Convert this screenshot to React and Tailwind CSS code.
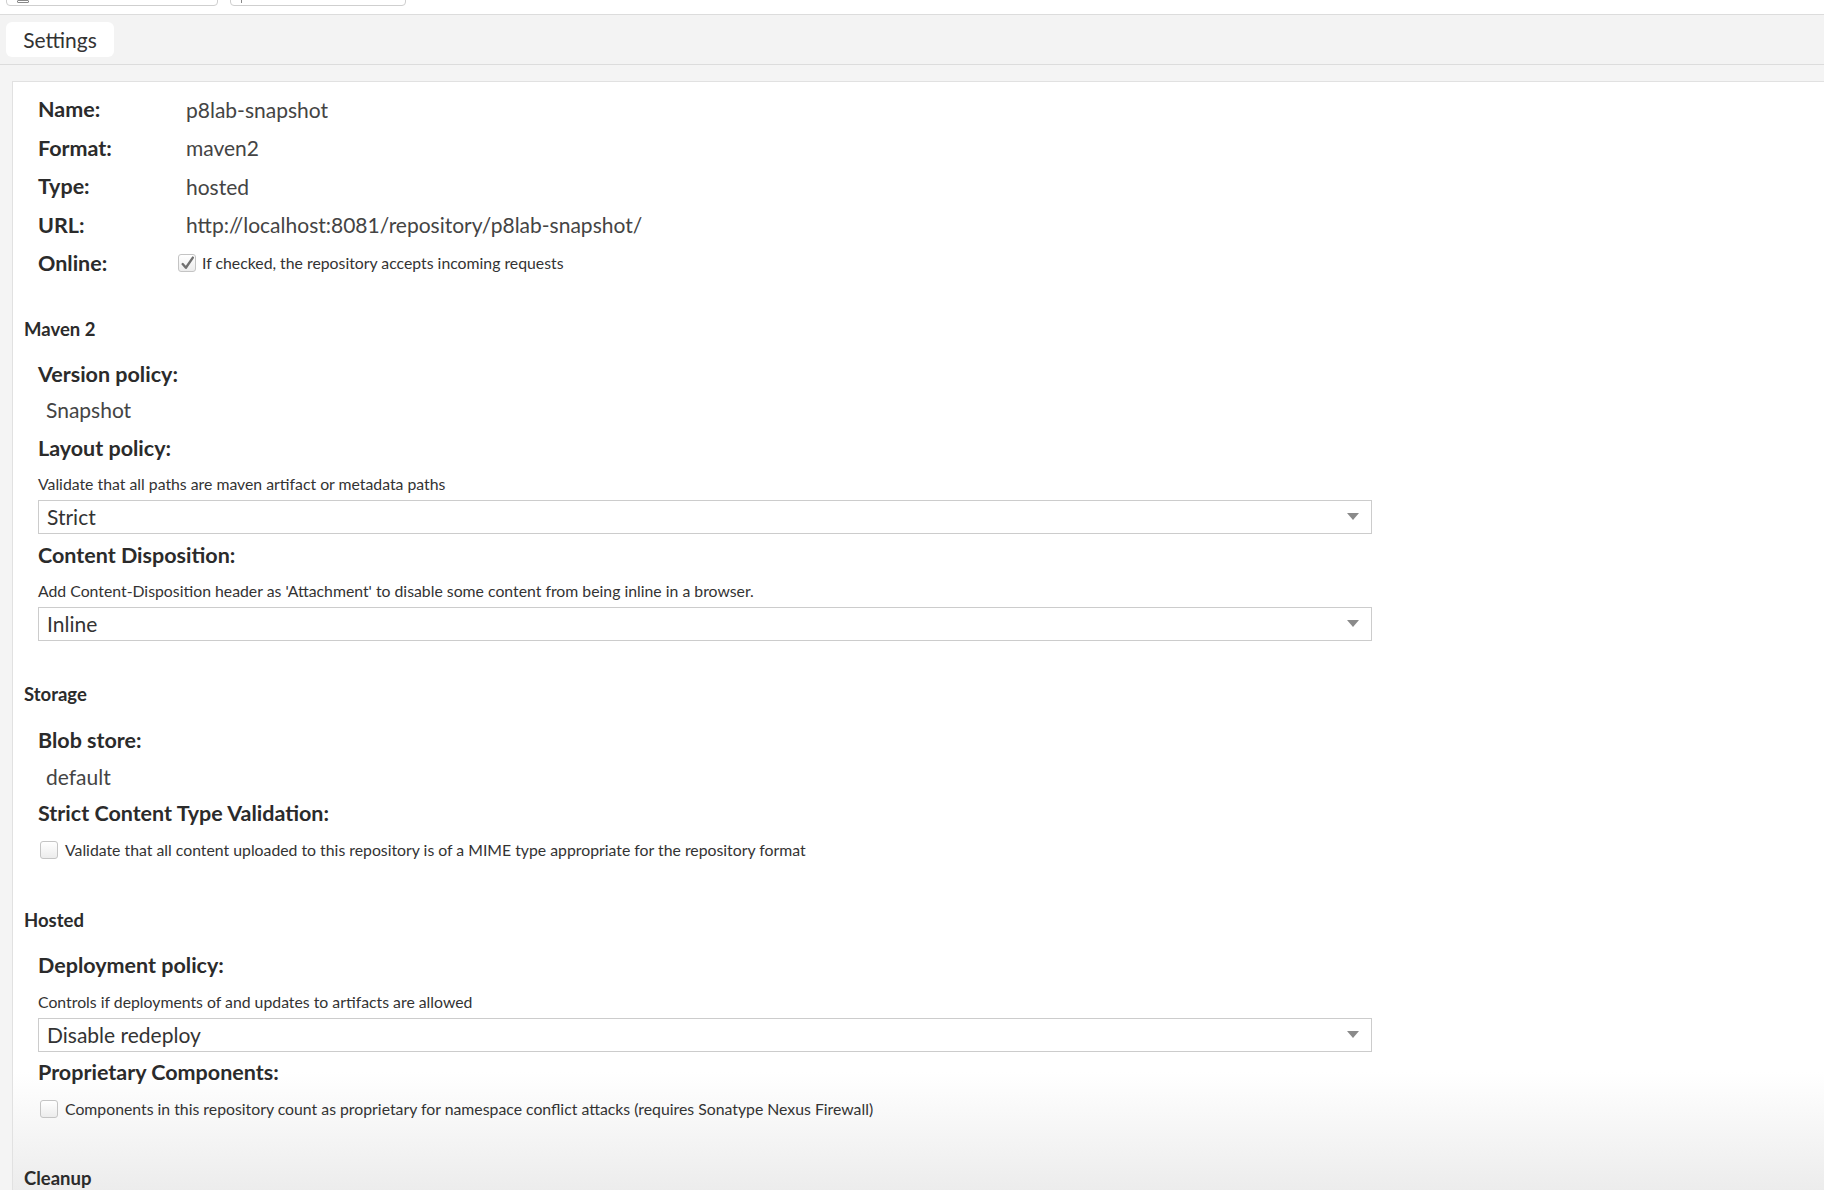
import React from 'react';

const FONT = { fontFamily: 'Lato, "Open Sans", sans-serif' };

const Checkbox = ({ checked }) => (
  <span className="inline-flex h-[18px] w-[18px] shrink-0 items-center justify-center rounded-[3px] border border-[#c4c4c4] bg-gradient-to-b from-white to-[#ececec]">
    {checked && (
      <svg width="15" height="15" viewBox="0 0 14 14">
        <path d="M2.5 7.5 L5.5 11 L12 1.5" fill="none" stroke="#6f6f6f" strokeWidth="2.2" strokeLinecap="round" strokeLinejoin="round" />
      </svg>
    )}
  </span>
);

const Select = ({ value, className = '' }) => (
  <div className={`flex h-[34px] w-[1334px] items-center justify-between border border-[#cccccc] bg-white pl-[8px] pr-[12px] ${className}`}>
    <span className="text-[21px] text-[#333]">{value}</span>
    <svg width="12" height="7" viewBox="0 0 12 7">
      <path d="M0 0 L12 0 L6 7 Z" fill="#8a8a8a" />
    </svg>
  </div>
);

const Label = ({ children, className = '' }) => (
  <div className={`flex h-[30px] items-center text-[21.5px] font-bold text-[#2b2b2b] ${className}`}>{children}</div>
);

const Value = ({ children, className = '' }) => (
  <div className={`flex h-[30px] items-center pl-[8px] text-[21px] text-[#444] ${className}`}>{children}</div>
);

const Help = ({ children, className = '' }) => (
  <div className={`flex h-[20px] items-center text-[15.8px] text-[#333] ${className}`}>{children}</div>
);

const Section = ({ children, className = '' }) => (
  <div className={`flex h-[24px] items-center text-[18.5px] font-bold text-[#2b2b2b] ${className}`}>{children}</div>
);

const CheckRow = ({ children, className = '' }) => (
  <div className={`flex h-[20px] items-center gap-[7px] pl-[2px] text-[15.8px] text-[#333] ${className}`}>
    <Checkbox />
    <span>{children}</span>
  </div>
);

const infoRows = [
  ['Name:', 'p8lab-snapshot'],
  ['Format:', 'maven2'],
  ['Type:', 'hosted'],
  ['URL:', 'http://localhost:8081/repository/p8lab-snapshot/'],
];

export default function App() {
  return (
    <div className="relative h-[1190px] w-full overflow-hidden bg-[#f4f4f4]" style={FONT}>
      {/* top toolbar remnants */}
      <div className="flex h-[15px] gap-[12px] border-b border-[#dcdcdc] bg-white pl-[6px]">
        <div className="-mt-[10px] flex h-[16px] w-[212px] items-end rounded-b-[4px] border border-[#cfcfcf] bg-white pb-[2px] pl-[10px]">
          <span className="h-[3px] w-[12px] rounded-[1px] border border-[#888]" />
        </div>
        <div className="-mt-[10px] flex h-[16px] w-[176px] items-end rounded-b-[4px] border border-[#cfcfcf] bg-white pb-[2px] pl-[10px]">
          <span className="h-[4px] w-[1px] bg-[#888]" />
        </div>
      </div>

      {/* tab bar */}
      <div className="flex h-[50px] items-start border-b border-[#dcdcdc] bg-[#f3f3f3] pl-[6px] pt-[7px]">
        <div className="flex h-[35px] w-[108px] items-center justify-center rounded-[6px] bg-white text-[21px] text-[#333]">
          Settings
        </div>
      </div>

      {/* panel */}
      <div className="relative ml-[12px] mt-[16px] h-[1200px] border-l border-t border-[#e1e1e1] bg-white">
        <div className="pointer-events-none absolute left-0 right-0 top-[990px] h-[120px] bg-gradient-to-b from-white to-[#ececec]" />
        <div className="relative pl-[11px] pt-[8px]">
          <div className="pl-[14px]">
            {infoRows.map(([k, v]) => (
              <div key={k} className="flex h-[38.5px] items-center">
                <span className="w-[148px] text-[21.5px] font-bold text-[#2b2b2b]">{k}</span>
                <span className="text-[21px] text-[#444]">{v}</span>
              </div>
            ))}
            <div className="flex h-[38.5px] items-center">
              <span className="w-[140px] text-[21.5px] font-bold text-[#2b2b2b]">Online:</span>
              <span className="flex items-center gap-[6px] text-[15.8px] text-[#333]">
                <Checkbox checked />
                If checked, the repository accepts incoming requests
              </span>
            </div>
          </div>

          <Section className="mt-[35px]">Maven 2</Section>
          <div className="pl-[14px]">
            <Label className="mt-[18px]">Version policy:</Label>
            <Value className="mt-[5px]">Snapshot</Value>
            <Label className="mt-[9px]">Layout policy:</Label>
            <Help className="mt-[10px]">Validate that all paths are maven artifact or metadata paths</Help>
            <Select value="Strict" className="mt-[6px]" />
            <Label className="mt-[7px]">Content Disposition:</Label>
            <Help className="mt-[10px]">Add Content-Disposition header as 'Attachment' to disable some content from being inline in a browser.</Help>
            <Select value="Inline" className="mt-[6px]" />
          </div>

          <Section className="mt-[42px]">Storage</Section>
          <div className="pl-[14px]">
            <Label className="mt-[19px]">Blob store:</Label>
            <Value className="mt-[6px]">default</Value>
            <Label className="mt-[7px]">Strict Content Type Validation:</Label>
            <CheckRow className="mt-[11px]">Validate that all content uploaded to this repository is of a MIME type appropriate for the repository format</CheckRow>
          </div>

          <Section className="mt-[49px]">Hosted</Section>
          <div className="pl-[14px]">
            <Label className="mt-[18px]">Deployment policy:</Label>
            <Help className="mt-[11px]">Controls if deployments of and updates to artifacts are allowed</Help>
            <Select value="Disable redeploy" className="mt-[6px]" />
            <Label className="mt-[6px]">Proprietary Components:</Label>
            <CheckRow className="mt-[11px]">Components in this repository count as proprietary for namespace conflict attacks (requires Sonatype Nexus Firewall)</CheckRow>
          </div>

          <Section className="mt-[48px]">Cleanup</Section>
        </div>
      </div>
    </div>
  );
}
